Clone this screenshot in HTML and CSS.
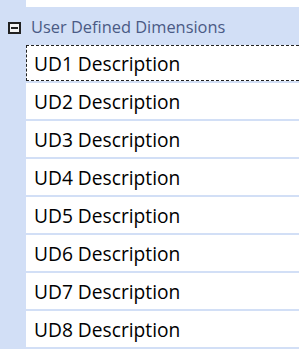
FILE: index.html
```html
<!DOCTYPE html>
<html lang="en">
<head>
    <meta charset="UTF-8">
    <title>User Defined Dimensions</title>
    <link rel="stylesheet" href="styles.css">
</head>
<body>
    <div class="tree">
        <div class="gutter"></div>
        <div class="panel">
            <div class="top-gap"></div>
            <div class="group-row">
                <span class="toggle"><span class="dash"></span></span>
                <span class="group-title">User Defined Dimensions</span>
            </div>
            <div class="item focused">UD1 Description</div>
            <div class="item">UD2 Description</div>
            <div class="item">UD3 Description</div>
            <div class="item">UD4 Description</div>
            <div class="item">UD5 Description</div>
            <div class="item">UD6 Description</div>
            <div class="item">UD7 Description</div>
            <div class="item">UD8 Description</div>
        </div>
    </div>
</body>
</html>
```

FILE: styles.css
```css
body {
    margin: 0;
    padding: 0;
    font-family: 'Open Sans', 'Noto Sans', sans-serif;
    background-color: #d2dff6;
}
.tree {
    display: flex;
    width: 299px;
    height: 349px;
    overflow: hidden;
}
.gutter {
    width: 26px;
    flex: none;
}
.panel {
    flex: 1;
    display: flex;
    flex-direction: column;
}
.top-gap {
    height: 7px;
    background-color: #fff;
}
.group-row {
    position: relative;
    height: 38px;
    display: flex;
    align-items: center;
    padding-left: 5px;
}
.toggle {
    position: absolute;
    left: -18px;
    top: 15px;
    width: 9px;
    height: 8px;
    border: 2px solid #222;
    background-color: #f4f4f4;
    display: flex;
    align-items: center;
    justify-content: center;
}
.dash {
    width: 7px;
    height: 2px;
    background-color: #222;
}
.group-title {
    font-size: 16.4px;
    color: #4a5a85;
}
.item {
    height: 36px;
    margin-bottom: 2px;
    background-color: #fff;
    display: flex;
    align-items: center;
    padding-left: 8px;
    font-size: 19.2px;
    color: #000;
    box-sizing: border-box;
}
.item.focused {
    border: 1px dashed #222;
    border-right: none;
    padding-left: 7px;
}
```
